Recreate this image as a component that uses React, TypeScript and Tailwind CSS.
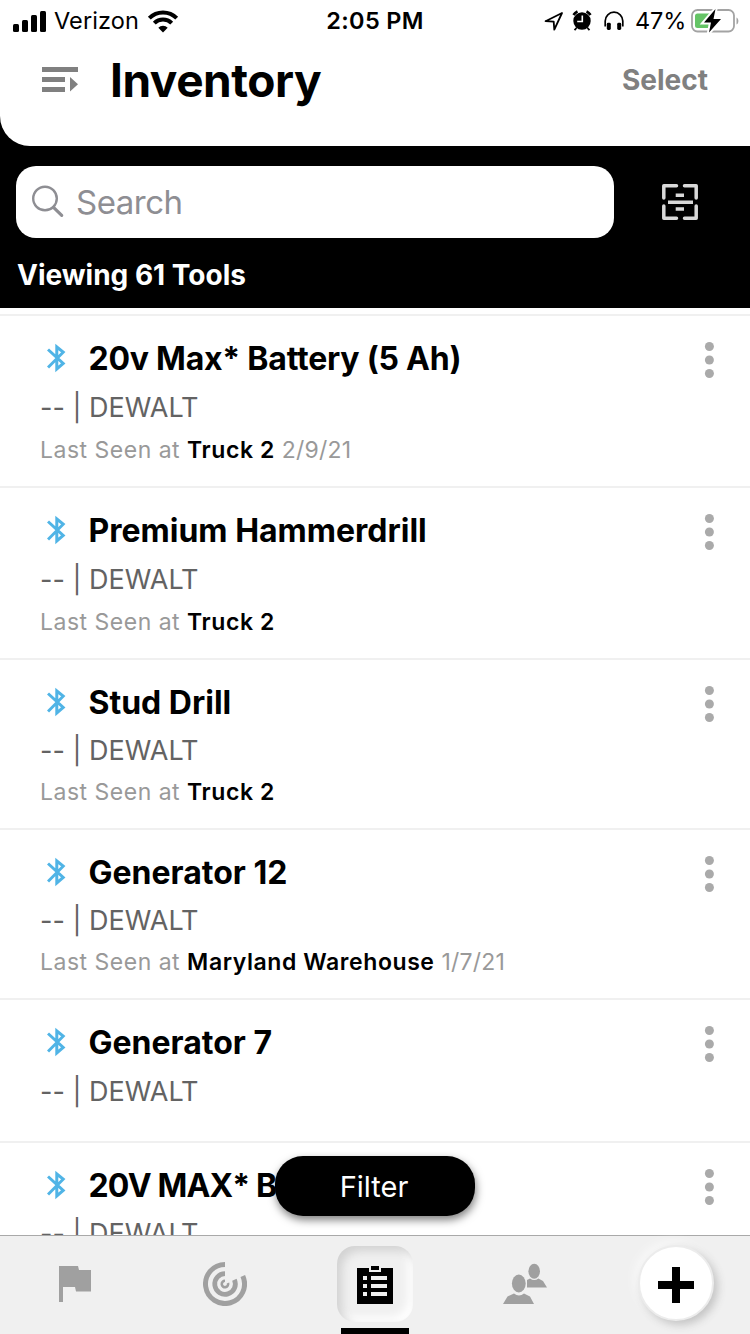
import { clsx } from "clsx";

type Tool = {
  name: string;
  place?: string;
  date?: string;
  size: string;
  tight?: boolean;
  tracking?: string;
};

const tools: Tool[] = [
  { name: "20v Max* Battery (5 Ah)", place: "Truck 2", date: "2/9/21", size: "h-[172px]", tracking: "tracking-[-0.23px]" },
  { name: "Premium Hammerdrill", place: "Truck 2", size: "h-[172px]" },
  { name: "Stud Drill", place: "Truck 2", size: "h-[170px]", tight: true },
  { name: "Generator 12", place: "Maryland Warehouse", date: "1/7/21", size: "h-[170px]", tight: true },
  { name: "Generator 7", size: "h-[143px]" },
  { name: "20V MAX* Battery", size: "h-[172px]", tight: true, tracking: "tracking-[-0.85px]" },
];

function StatusBar() {
  return (
    <div className="grid h-10 grid-cols-[1fr_auto_1fr] items-center text-[23.5px] leading-10">
      <div className="flex items-center pl-[13px]">
        <svg width="33" height="22" viewBox="0 0 33 22">
          <rect x="0" y="14" width="6" height="8" rx="1.5" />
          <rect x="9" y="10" width="6" height="12" rx="1.5" />
          <rect x="18" y="5" width="6" height="17" rx="1.5" />
          <rect x="27" y="1" width="6" height="21" rx="1.5" />
        </svg>
        <span className="ml-2 w-[93px] tracking-[0.1px]">Verizon</span>
        <svg width="32" height="24" viewBox="0 0 32 24" fill="none" stroke="#000">
          <path d="M2.3 9.2a19.3 19.3 0 0 1 27.4 0" strokeWidth="4" />
          <path d="M7.3 14.2a12.3 12.3 0 0 1 17.4 0" strokeWidth="4" />
          <path d="M16 23.4l-4.7-4.7a6.6 6.6 0 0 1 9.4 0z" fill="#000" stroke="none" />
        </svg>
      </div>
      <span className="font-semibold tracking-[0.3px]">2:05 PM</span>
      <div className="flex items-center justify-end pr-[11px]">
        <svg width="20" height="20" viewBox="0 0 20 20" fill="none" stroke="#000" strokeWidth="1.8" strokeLinejoin="round">
          <path d="M18 2L1.5 10.2l8.2.4.6 8z" />
        </svg>
        <svg className="ml-2" width="20" height="22" viewBox="0 0 20 22">
          <circle cx="10" cy="11" r="8.7" />
          <path d="M1.5 5A9 9 0 0 1 5.500 1.500M18.500 5a9 9 0 0 0-4-3.500" stroke="#000" strokeWidth="2.6" fill="none" />
          <path d="M4.500 18l-2 2.200M15.500 18l2 2.200" stroke="#000" strokeWidth="1.8" />
          <path d="M10.300 5.500v6H5.200" stroke="#fff" strokeWidth="1.6" fill="none" />
        </svg>
        <svg className="ml-3" width="20" height="20" viewBox="0 0 20 20">
          <path d="M1.2 15.5V10a8.8 8.8 0 0 1 17.6 0v5.5" fill="none" stroke="#000" strokeWidth="1.7" />
          <rect x="2.8" y="11.8" width="4" height="7.2" rx="1.4" />
          <rect x="13.2" y="11.8" width="4" height="7.2" rx="1.4" />
        </svg>
        <span className="ml-[11px] w-[55px] tracking-[-0.1px]">47%</span>
        <svg width="49" height="26" viewBox="0 0 49 26">
          <rect x="2" y="2" width="42" height="21.5" rx="5.5" fill="none" stroke="#a3a3a3" strokeWidth="1.8" />
          <path d="M7.500 5.500h13v14.500h-13a2.500 2.500 0 0 1-2.500-2.500v-9.500a2.500 2.500 0 0 1 2.500-2.500z" fill="#65c466" />
          <path d="M46.500 9.500c2.500 1 2.500 6 0 7z" fill="#a3a3a3" />
          <path d="M25.500 1L14 14.500h7L19 24.500 31 11h-7.500z" stroke="#fff" strokeWidth="4" />
          <path d="M25.500 1L14 14.500h7L19 24.500 31 11h-7.500z" />
        </svg>
      </div>
    </div>
  );
}

function Header() {
  return (
    <header className="h-[146px] rounded-bl-[30px] bg-white">
      <div className="pt-px">
        <StatusBar />
      </div>
      <div className="-mt-px flex h-20 items-center pr-[42px] pl-[42px]">
        <svg width="36" height="26" viewBox="0 0 36 26" fill="#808080">
          <path d="M0 0h36v5H0zM0 10h23v5H0zM0 20h23v5H0zM28 10l8 7.200-8 7.200z" />
        </svg>
        <h1 className="ml-8 text-[46px] font-bold tracking-[-0.45px]">Inventory</h1>
        <button className="ml-auto text-[28px] font-bold text-[#808080]">Select</button>
      </div>
    </header>
  );
}

function SearchPanel() {
  return (
    <section className="h-[162px] px-4 pt-5">
      <div className="flex items-center">
        <div className="flex h-[72px] w-[598px] items-center rounded-[20px] bg-white pl-4 text-[#8e8e93]">
          <svg width="32" height="34" viewBox="0 0 32 34" fill="none" stroke="currentColor" strokeLinecap="round">
            <circle cx="13" cy="13.500" r="11.800" strokeWidth="2.400" />
            <path d="M21.500 22.300l8.200 8" strokeWidth="3.200" />
          </svg>
          <span className="ml-3 pt-0.5 text-[33px] tracking-[-0.5px]">Search</span>
        </div>
        <svg className="ml-12" width="36" height="36" viewBox="0 0 36 36" fill="none" stroke="#d9d9d9" strokeWidth="3.500">
          <path
            d="M1.800 14V1.800H14.500M22.500 1.800H34.200V14M34.200 22V34.200H22.500M14.500 34.200H1.800V22"
            strokeLinecap="round"
            strokeLinejoin="round"
          />
          <path d="M6 18.300h25M13.700 11.300h8.300M13.700 25h8.300" />
        </svg>
      </div>
      <p className="mt-[18px] ml-px text-[28px] leading-[38px] font-bold text-white">Viewing 61 Tools</p>
    </section>
  );
}

function ToolRow({ tool }: { tool: Tool }) {
  return (
    <li className={clsx("flex shrink-0 justify-between border-t-2 border-[#f0f0f0] pt-[22px] pr-9 pl-10", tool.size)}>
      <div className="whitespace-nowrap [font-feature-settings:'calt'_0]">
        <div className="flex h-[41px] items-start">
          <svg className="mt-[5px] ml-[7px]" width="19" height="30" viewBox="0 0 19 30" fill="none" stroke="#50b4e6" strokeWidth="3">
            <path d="M1 6.500L16.200 20.500 9.800 26V4L16.200 9.200 1 24.500" />
          </svg>
          <h2 className={clsx("mt-px ml-[22.5px] text-[32px] leading-10 font-bold", tool.tracking)}>{tool.name}</h2>
        </div>
        <p className={clsx("text-[27px] leading-8 text-[#636363]", tool.tight ? "mt-3" : "mt-[13px]")}>
          -- | DEWALT
        </p>
        {tool.place && (
          <p className={clsx("text-[23px] leading-7 tracking-[0.5px] text-[#999]", tool.tight ? "mt-[11px]" : "mt-3")}>
            Last Seen at <span className="font-semibold tracking-[0.58px] text-black">{tool.place}</span>{" "}
            <span className="tracking-[0.2px]">{tool.date}</span>
          </p>
        )}
      </div>
      <svg className="mt-0.5" width="10" height="38" viewBox="0 0 10 38" fill="#aaa">
        <circle cx="5.400" cy="6.500" r="4.500" />
        <circle cx="5.400" cy="20" r="4.500" />
        <circle cx="5.400" cy="33.500" r="4.500" />
      </svg>
    </li>
  );
}

function TabBar() {
  return (
    <nav className="grid h-[99px] shrink-0 grid-cols-5 justify-items-center border-t border-[#a9a9a9] bg-[#f0f0f0]">
      <svg className="mt-[30px]" width="32" height="36" viewBox="0 0 32 36" fill="#a0a0a0">
        <path d="M0 0h19l1 4h12v21.500H17l-1-4.500H4v15H0z" />
      </svg>
      <svg className="mt-[26px]" width="44" height="44" viewBox="0 0 44 44" fill="none" stroke="#a0a0a0">
        <path d="M22 2.500A19.500 19.500 0 1 0 39.800 14" strokeWidth="5" />
        <path d="M22 11.700A10.300 10.300 0 1 0 31.400 17.700" strokeWidth="4.800" />
        <path d="M22 18.800A3.200 3.200 0 1 0 25 21" strokeWidth="2.600" />
      </svg>
      {/* Active tab */}
      <div className="flex flex-col items-center">
        <div className="mt-2.5 flex size-[76px] justify-center rounded-[18px] bg-[#f0f0f0] pt-5 shadow-[inset_5px_5px_10px_#d2d2d2,inset_-5px_-5px_10px_#ffffff]">
          <svg width="36" height="38" viewBox="0 0 36 38">
            <path d="M0 2h36v36H0z" />
            <path
              d="M12 2h12v4H12zM6 10h4v4H6zM14 10h16v4H14zM6 18h4v4H6zM14 18h16v4H14zM6 26h4v4H6zM14 26h16v4H14z"
              fill="#f0f0f0"
            />
            <path d="M14 0h8v4h-8z" />
          </svg>
        </div>
        <div className="mt-1.5 h-1.5 w-[68px] bg-black" />
      </div>
      <svg className="mt-[27px]" width="44" height="42" viewBox="0 0 44 42" fill="#a0a0a0">
        <ellipse cx="31.200" cy="8.300" rx="5.800" ry="7.500" />
        <path d="M24 24.500v-7.500l3-1.500q4.200 3 8.400 0l4.600 2.500 4 6.500z" />
        <ellipse cx="15.800" cy="20.500" rx="6.900" ry="9" />
        <path d="M0 41l4.500-7.500 6.500-3q5 4 10 0l6 3L31 41z" />
      </svg>
      <button className="mt-[9px] ml-px flex size-[76px] items-center justify-center rounded-full border-2 border-[#ececec] bg-white shadow-[4px_4px_8px_#c4c4c4,-4px_-4px_8px_#f8f8f8]">
        <svg className="mt-[3px]" width="36" height="36" viewBox="0 0 36 36">
          <path d="M14 0h8v14h14v8H22v14h-8V22H0v-8h14z" />
        </svg>
      </button>
    </nav>
  );
}

export default function App() {
  return (
    <div className="flex h-[1334px] w-[750px] flex-col overflow-hidden bg-white font-['Inter',sans-serif] text-black">
      <div className="shrink-0 bg-black">
        <Header />
        <SearchPanel />
      </div>
      <main className="relative min-h-0 flex-1 overflow-hidden pt-1.5">
        <ul className="flex flex-col">
          {tools.map((tool, i) => (
            <ToolRow key={i} tool={tool} />
          ))}
        </ul>
        <button className="absolute bottom-[19px] left-[275px] h-[60px] w-[200px] rounded-[28px] bg-black pt-0.5 pr-0.5 text-[29px] text-white shadow-[1px_4px_8px_rgba(0,0,0,0.5)]">
          Filter
        </button>
      </main>
      <TabBar />
    </div>
  );
}
